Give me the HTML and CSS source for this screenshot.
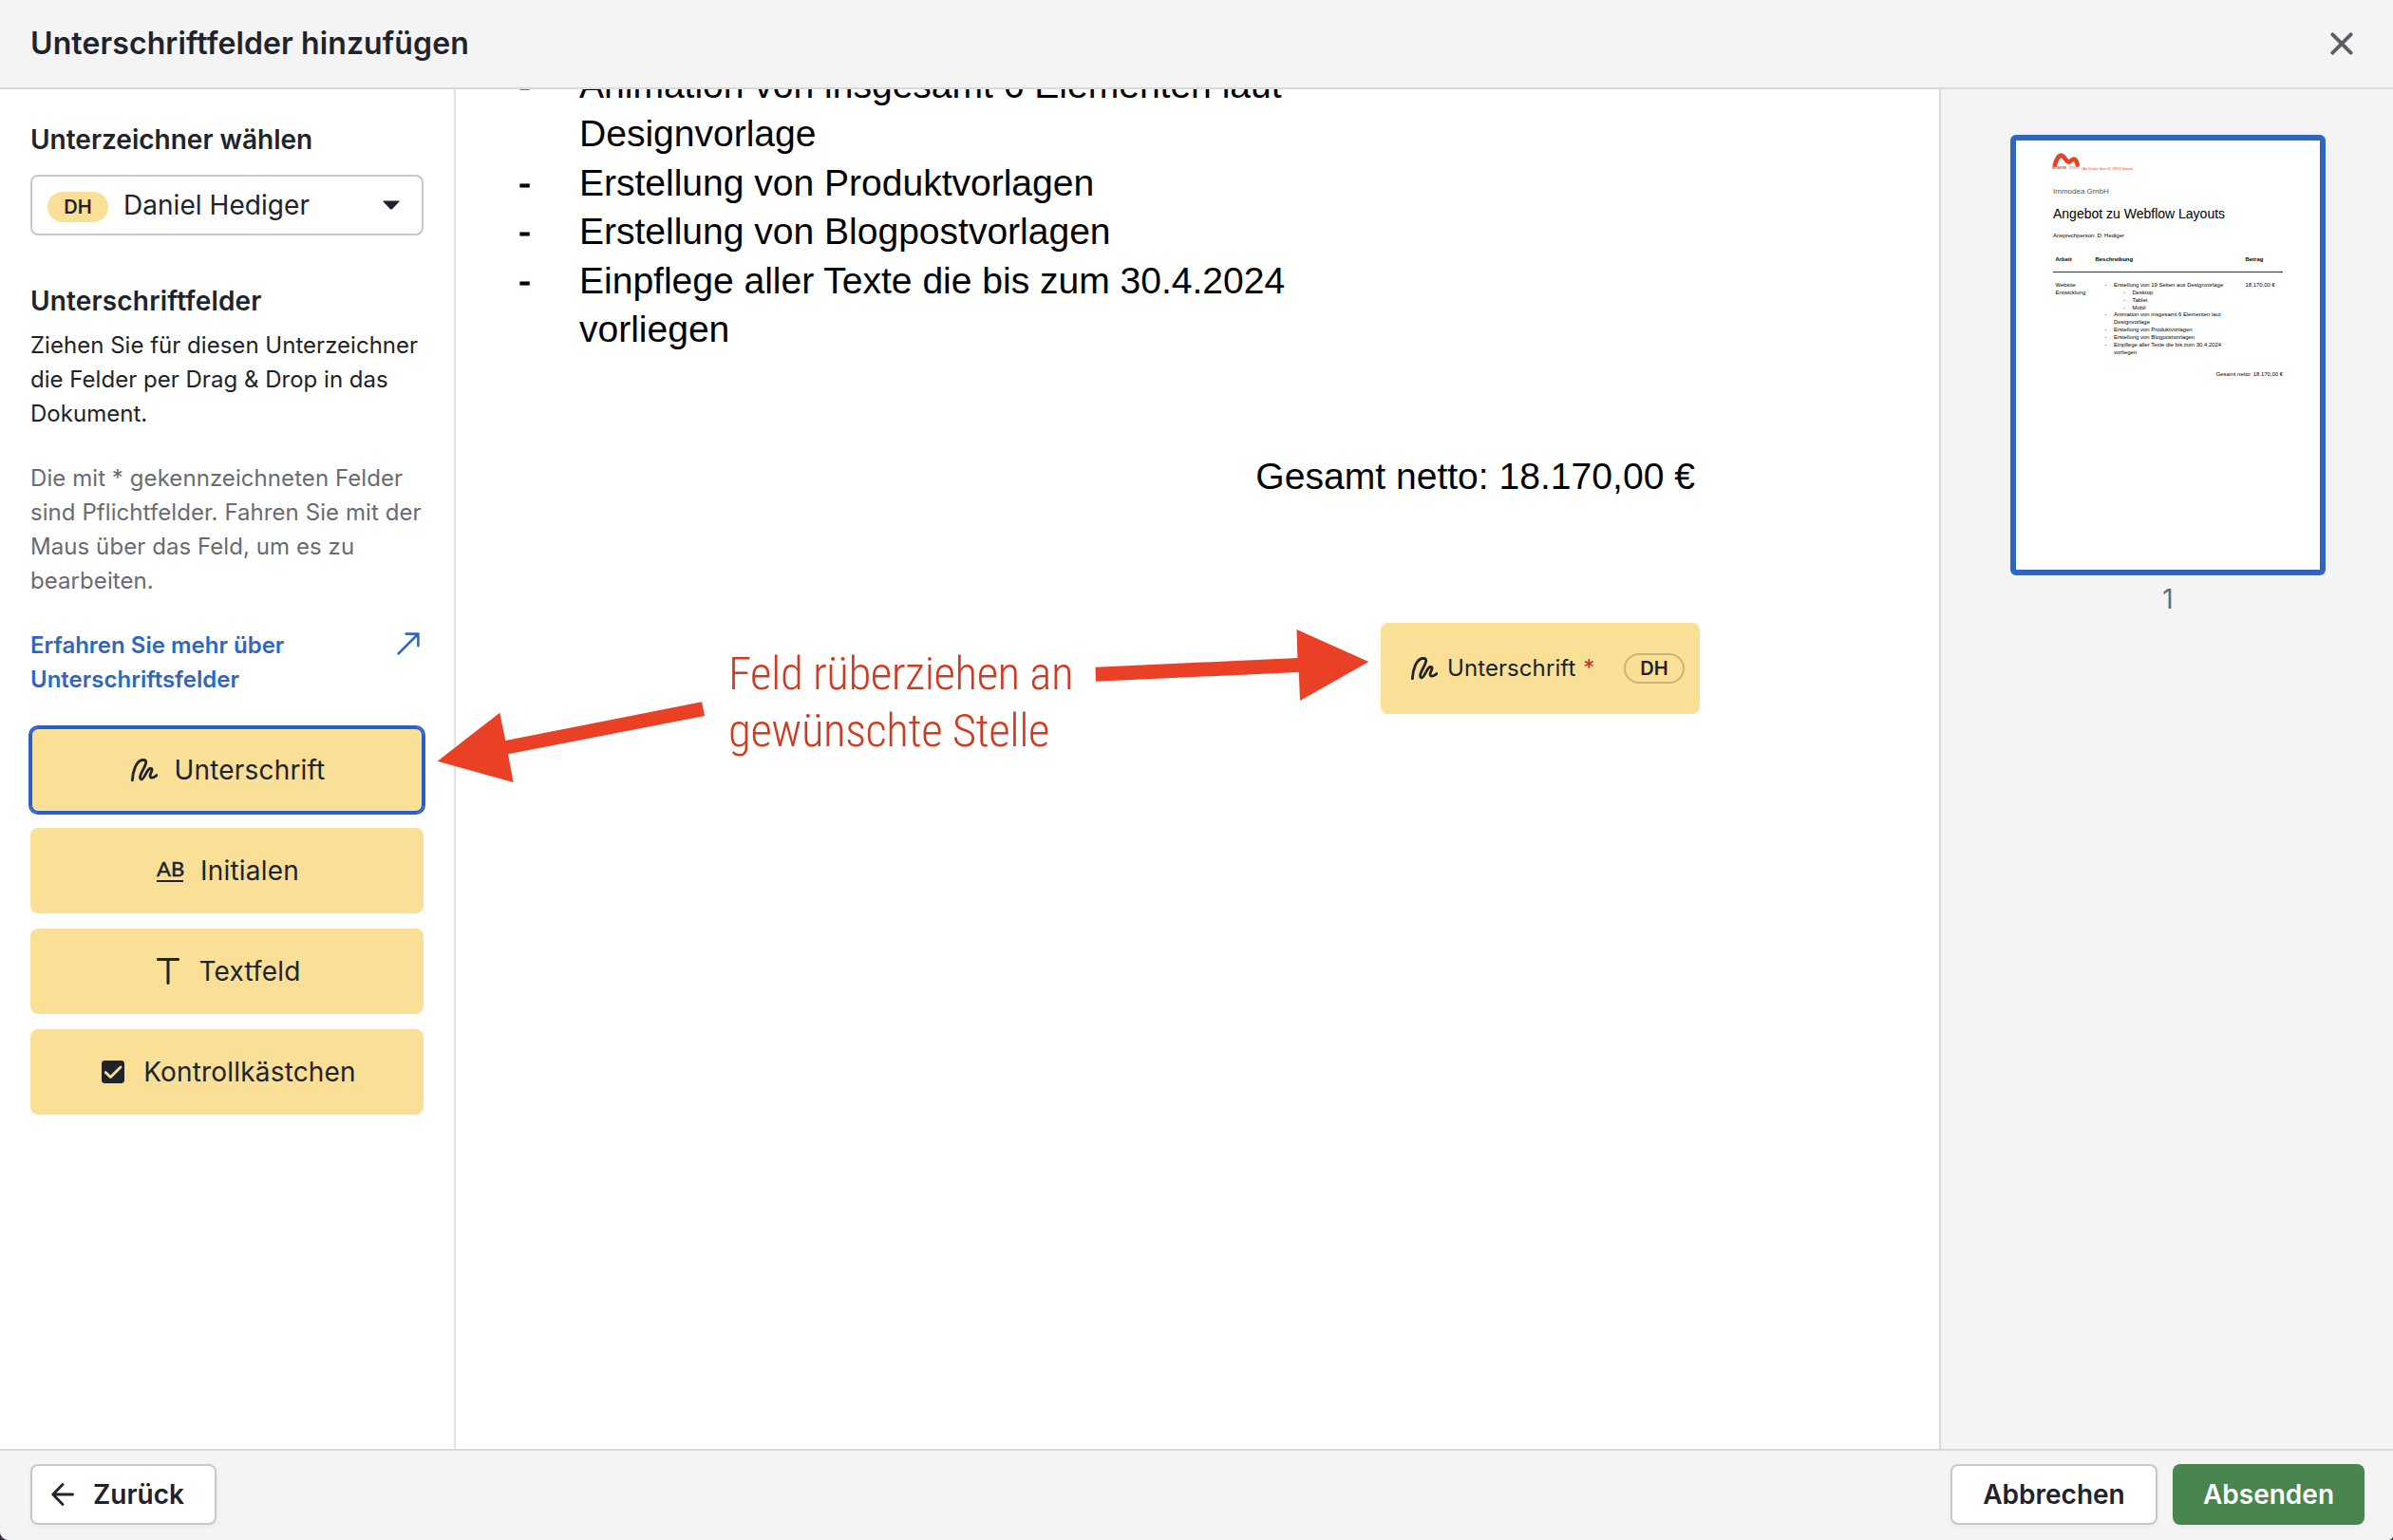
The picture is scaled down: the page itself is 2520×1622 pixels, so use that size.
FILE: index.html
```html
<!DOCTYPE html>
<html lang="de">
<head>
<meta charset="utf-8">
<title>Unterschriftfelder hinzufügen</title>
<link rel="stylesheet" href="styles.css">
</head>
<body>
<svg width="0" height="0" class="symbols" aria-hidden="true">
  <symbol id="sign" viewBox="0 0 28 24">
    <path d="M1.4 22.8C1.6 15 5 1.4 13 1.3C17.6 1.4 15.4 6.6 13 11C10.6 15.4 8 20.6 10.6 21.8C13.6 23 16 12 20 10.4C23.4 9.6 21.8 13.4 20.6 16C19 19.6 21.2 22.2 27 17.6" fill="none" stroke="currentColor" stroke-width="2.8" stroke-linecap="round" stroke-linejoin="round"/>
  </symbol>
</svg>
<div class="app">
  <header class="topbar">
    <h1>Unterschriftfelder hinzufügen</h1>
    <button class="close" aria-label="Schließen">
      <svg width="24" height="24" viewBox="0 0 24 24"><path d="M2.4 2.4L21.6 21.6M21.6 2.4L2.4 21.6" stroke="#5d5f66" stroke-width="3.9" stroke-linecap="round"/></svg>
    </button>
  </header>

  <div class="body">
    <aside class="sidebar">
      <h2>Unterzeichner wählen</h2>
      <div class="select">
        <span class="pill">DH</span>
        <span class="select-name">Daniel Hediger</span>
        <svg width="18" height="10" viewBox="0 0 18 10"><path d="M1 .4H17Q18.2 .4 17.4 1.4L10 9.2Q9 10 8 9.2L.6 1.4Q-.2 .4 1 .4Z" fill="#20232b"/></svg>
      </div>
      <h2 class="fields-title">Unterschriftfelder</h2>
      <p>Ziehen Sie für diesen Unterzeichner die Felder per Drag &amp; Drop in das Dokument.</p>
      <p class="muted">Die mit * gekennzeichneten Felder sind Pflichtfelder. Fahren Sie mit der Maus über das Feld, um es zu bearbeiten.</p>
      <a class="more">
        <span>Erfahren Sie mehr über Unterschriftsfelder</span>
        <svg width="24" height="24" viewBox="0 0 24 24"><path d="M1.6 22.4L22 2M9.6 1.6H22.4V14.2" fill="none" stroke="currentColor" stroke-width="2.6" stroke-linecap="round" stroke-linejoin="round"/></svg>
      </a>
      <div class="fields">
        <button class="field selected"><span class="icon"><svg width="28" height="24"><use href="#sign"/></svg></span>Unterschrift</button>
        <button class="field"><span class="icon"><span class="ab">AB</span></span>Initialen</button>
        <button class="field"><span class="icon"><svg width="24" height="28" viewBox="0 0 24 28"><path d="M1.4 1.5H22.6M12 1.5V26.4" stroke="currentColor" stroke-width="3" stroke-linecap="round"/></svg></span>Textfeld</button>
        <button class="field"><span class="icon"><svg width="24" height="24" viewBox="0 0 24 24"><rect width="24" height="24" rx="3.4" fill="currentColor"/><path d="M4.2 12.6L9.4 17.6L20 7" fill="none" stroke="#fae096" stroke-width="2.8" stroke-linecap="round" stroke-linejoin="round"/></svg></span>Kontrollkästchen</button>
      </div>
    </aside>

    <main class="canvas">
      <div class="page">
        <ul class="page-list">
          <li>Animation von insgesamt 6 Elementen laut<br>Designvorlage</li>
          <li>Erstellung von Produktvorlagen</li>
          <li>Erstellung von Blogpostvorlagen</li>
          <li>Einpflege aller Texte die bis zum 30.4.2024<br>vorliegen</li>
        </ul>
        <div class="total">Gesamt netto: 18.170,00 €</div>
      </div>
      <div class="placed">
        <svg width="28" height="24"><use href="#sign"/></svg>
        <span class="placed-name">Unterschrift <span class="req">*</span></span>
        <span class="badge">DH</span>
      </div>
      <div class="note">Feld rüberziehen an<br>gewünschte Stelle</div>
    </main>

    <aside class="thumbs">
      <div class="thumb">
        <svg class="logo" width="30" height="15" viewBox="0 0 30 15"><path d="M2.9 12.6C5.6 3.4 9 .6 12.4 4.4C14.8 7.2 16.4 11.6 19.4 8.6C22.8 5.2 25.4 6 26.7 12.6" fill="none" stroke="#e8412a" stroke-width="4.6" stroke-linecap="round" stroke-linejoin="round"/></svg>
        <div class="brand"><b>METAWORK</b><span>STUDIO</span><i>| Am Dicken Stein 16, 53913 Swisttal</i></div>
        <div class="client">Immodea GmbH</div>
        <div class="offer">Angebot zu Webflow Layouts</div>
        <div class="contact">Ansprechperson: D. Hediger</div>
        <div class="row head"><span>Arbeit</span><span>Beschreibung</span><span>Betrag</span></div>
        <div class="row">
          <span>Website<br>Entwicklung</span>
          <ul>
            <li>Erstellung von 19 Seiten aus Designvorlage
              <ul><li>Desktop</li><li>Tablet</li><li>Mobil</li></ul>
            </li>
            <li>Animation von insgesamt 6 Elementen laut<br>Designvorlage</li>
            <li>Erstellung von Produktvorlagen</li>
            <li>Erstellung von Blogpostvorlagen</li>
            <li>Einpflege aller Texte die bis zum 30.4.2024<br>vorliegen</li>
          </ul>
          <span>18.170,00 €</span>
        </div>
        <div class="thumb-total">Gesamt netto: 18.170,00 €</div>
      </div>
      <div class="page-number">1</div>
    </aside>
  </div>

  <footer class="actions">
    <button class="btn back"><svg width="24" height="24" viewBox="0 0 24 24"><path d="M12 1.6L1.8 12L12 22.4M1.8 12H22.6" fill="none" stroke="currentColor" stroke-width="2.8" stroke-linecap="round" stroke-linejoin="round"/></svg>Zurück</button>
    <span class="spacer"></span>
    <button class="btn cancel">Abbrechen</button>
    <button class="btn send">Absenden</button>
  </footer>

  <svg class="arrows" width="2520" height="1622" viewBox="0 0 2520 1622">
    <path d="M460.7 801.7L526.3 750.7L532.3 780L739 739.3L742.1 754L535 794.3L540.6 824Z"/>
    <path d="M1153.5 702.7L1366.4 693L1365.5 663L1441.4 697L1369 738L1367.8 708L1154 717.7Z"/>
  </svg>
</div>
</body>
</html>
```
FILE: styles.css
```css
* { box-sizing: border-box; }

body {
  margin: 0;
  background: #3a3144;
  color: #20232b;
  font-family: Inter, "Liberation Sans", sans-serif;
  font-size: 24px;
  line-height: 36px;
  font-variant-ligatures: none;
}

h1, h2, p, ul { margin: 0; padding: 0; }
ul { list-style: none; }
button { margin: 0; border: 0; padding: 0; font: inherit; color: inherit; background: none; }
svg { display: block; flex: none; }
.symbols { position: absolute; }

.app {
  position: relative;
  display: flex;
  flex-direction: column;
  width: 2520px;
  height: 1622px;
  overflow: hidden;
  background: #fff;
  border-radius: 0 0 5px 9px;
}

.topbar {
  display: flex;
  align-items: center;
  justify-content: space-between;
  height: 94px;
  padding: 0 42px 0 32px;
  background: #f4f4f4;
  border-bottom: 2px solid #dadada;
}
.topbar h1 { font-size: 32px; font-weight: 600; line-height: 40px; letter-spacing: 0.1px; }

.body { display: flex; height: 1432px; }

.sidebar {
  width: 480px;
  padding: 32px 32px 0;
  border-right: 2px solid #e2e2e2;
}
.sidebar h2 { font-size: 28px; font-weight: 600; line-height: 42px; }
.select {
  display: flex;
  align-items: center;
  height: 64px;
  margin-top: 16px;
  padding: 0 23px 0 16px;
  border: 2px solid #c8c8c9;
  border-radius: 8px;
  font-size: 28px;
}
.pill {
  width: 64px;
  height: 32px;
  margin: 3px 16px 0 0;
  border-radius: 16px;
  background: #fae096;
  font-size: 20px;
  font-weight: 600;
  line-height: 32px;
  text-align: center;
}
.select-name { flex: 1; letter-spacing: 0.05px; }
.sidebar h2.fields-title { margin-top: 48px; letter-spacing: 0.16px; }
.sidebar p { margin: 8px -12px 0 0; padding-right: 8px; letter-spacing: 0.02px; }
.sidebar p.muted { margin-top: 32px; color: #696b72; letter-spacing: 0.07px; }
.more {
  display: flex;
  justify-content: space-between;
  margin-top: 32px;
  padding-right: 4px;
  color: #2f66c2;
  font-weight: 600;
}
.more span { width: 300px; }
.more svg { margin-top: 4px; }

.fields { display: grid; gap: 16px; margin-top: 32px; }
.field {
  display: flex;
  align-items: center;
  justify-content: center;
  gap: 16px;
  height: 90px;
  border-radius: 8px;
  background: #fae096;
  font-size: 28px;
  letter-spacing: 0.18px;
}
.field.selected { box-shadow: 0 0 0 2px #285fc8, inset 0 0 0 2px #285fc8; }
.icon { display: flex; justify-content: center; width: 32px; }
.ab {
  width: 28px;
  height: 23px;
  border-bottom: 2px solid currentColor;
  font-family: Lato, sans-serif;
  font-size: 22px;
  letter-spacing: 0;
  line-height: 17px;
  -webkit-text-stroke: 0.5px currentColor;
}

.canvas {
  position: relative;
  flex: 1;
  overflow: hidden;
  color: #000;
}
.page {
  margin: -30px 257px 0 66px;
  font-family: "Liberation Sans", Arial, sans-serif;
  font-size: 39.1px;
  line-height: 51.4px;
}
.page-list li { display: grid; grid-template-columns: 64px 1fr; letter-spacing: -0.03px; }
.page-list li::before { content: "-"; -webkit-text-stroke: 0.8px #000; }
.total { margin-top: 104px; text-align: right; }

.placed {
  position: absolute;
  left: 974px;
  top: 562px;
  display: flex;
  align-items: center;
  width: 336px;
  height: 96px;
  padding: 0 16px 0 32px;
  border-radius: 8px;
  background: #fae096;
  color: #20232b;
}
.placed-name { flex: 1; padding-left: 10px; letter-spacing: 0.08px; white-space: nowrap; }
.req { margin-left: 1px; color: #c0322f; }
.badge {
  width: 64px;
  height: 32px;
  border: 2px solid #c8b378;
  border-radius: 16px;
  font-size: 20px;
  font-weight: 600;
  line-height: 28px;
  text-align: center;
}
.note {
  position: absolute;
  left: 287px;
  top: 586px;
  color: #cf3a20;
  font-family: "Roboto Condensed", Roboto, sans-serif;
  font-size: 49px;
  font-weight: 300;
  letter-spacing: -0.47px;
  line-height: 60px;
  white-space: nowrap;
}

.thumbs {
  width: 478px;
  padding-top: 48px;
  border-left: 2px solid #dadada;
  background: #f4f4f4;
}
.thumb {
  width: 332px;
  height: 464px;
  margin-left: 73px;
  padding: 13px 39px 0 38px;
  border: 6px solid #2f66c2;
  border-radius: 6px;
  background: #fff;
  color: #000;
  font-family: "Liberation Sans", Arial, sans-serif;
  font-size: 5.94px;
  line-height: 7.84px;
}
.brand {
  display: flex;
  align-items: center;
  height: 4px;
  color: #e8412a;
  font-size: 2.6px;
  line-height: 4px;
  white-space: nowrap;
}
.brand b { width: 18px; }
.brand span { width: 13px; }
.brand i { font-size: 3.3px; font-style: normal; }
.client { margin-top: 15px; padding-left: 1px; color: #555; font-size: 8px; line-height: 14px; }
.offer { margin-top: 5px; padding-left: 1px; font-size: 14px; line-height: 22px; white-space: nowrap; }
.contact { margin-top: 5px; padding-left: 1px; line-height: 14px; }
.row {
  display: grid;
  grid-template-columns: 42px 158px 1fr;
  margin-left: 1px;
  padding: 10px 0 0 2.5px;
  white-space: nowrap;
}
.row.head { height: 32px; padding-top: 15px; border-bottom: 1px solid #333; font-weight: 700; }
.row ul { padding-left: 10px; }
.row li { position: relative; padding-left: 9.5px; }
.row li::before { content: "-"; position: absolute; left: 0; }
.thumb-total { margin-top: 16px; text-align: right; }
.page-number { margin-top: 5px; padding-left: 2px; color: #696b72; font-size: 28px; line-height: 40px; text-align: center; }

.actions {
  display: flex;
  gap: 16px;
  height: 96px;
  padding: 14px 30px 0 32px;
  border-top: 2px solid #dadada;
  background: #f4f4f4;
}
.spacer { flex: 1; }
.btn {
  display: flex;
  align-items: center;
  justify-content: center;
  height: 64px;
  border: 2px solid #c8c8c9;
  border-radius: 8px;
  background: #fff;
  box-shadow: 0 2px 4px rgba(0, 0, 0, .05);
  font-size: 28px;
  font-weight: 600;
}
.back { width: 196px; justify-content: flex-start; gap: 20px; padding-left: 20px; }
.cancel { width: 218px; }
.send { width: 202px; border: 0; background: #49854f; color: #fff; }

.arrows { position: absolute; left: 0; top: 0; fill: #ea4126; pointer-events: none; }
```
